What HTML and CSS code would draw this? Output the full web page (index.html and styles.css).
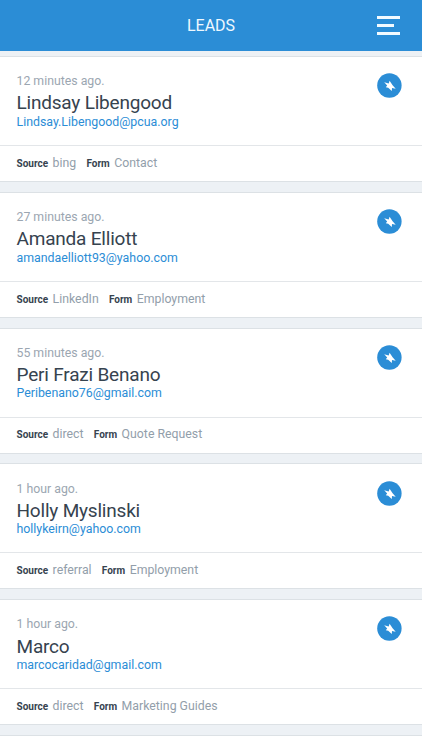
FILE: index.html
```html
<!DOCTYPE html>
<html lang="en">
<head>
<meta charset="utf-8">
<title>Leads</title>
<link rel="stylesheet" href="styles.css">
</head>
<body>
<svg class="defs" aria-hidden="true">
  <symbol id="bolt" viewBox="0 0 25 25">
    <circle cx="12.4" cy="12.5" r="12.2" fill="#2b8dd6"/>
    <path d="M7.2 9.3 L11.7 10.6 L12.6 7.8 L15.6 12.2 L18.7 15.7 L15 15 L14.8 18 L11.2 14.8 L8.8 14.2 L10.2 12.6 Z" fill="#fff"/>
  </symbol>
</svg>
<header class="topbar">
  <h1 class="title">LEADS</h1>
  <button class="menu" aria-label="Menu"><span class="bar"></span><span class="bar short"></span><span class="bar"></span></button>
</header>
<main class="leads">
  <article class="card">
    <div class="main">
      <div class="person"><p class="time">12 minutes ago.</p><h2 class="name">Lindsay Libengood</h2><a class="email">Lindsay.Libengood@pcua.org</a></div>
      <svg class="bolt"><use href="#bolt"/></svg>
    </div>
    <div class="meta"><b>Source</b><span>bing</span><b>Form</b><span>Contact</span></div>
  </article>
  <article class="card">
    <div class="main">
      <div class="person"><p class="time">27 minutes ago.</p><h2 class="name">Amanda Elliott</h2><a class="email">amandaelliott93@yahoo.com</a></div>
      <svg class="bolt"><use href="#bolt"/></svg>
    </div>
    <div class="meta"><b>Source</b><span>LinkedIn</span><b>Form</b><span>Employment</span></div>
  </article>
  <article class="card">
    <div class="main">
      <div class="person"><p class="time">55 minutes ago.</p><h2 class="name">Peri Frazi Benano</h2><a class="email">Peribenano76@gmail.com</a></div>
      <svg class="bolt"><use href="#bolt"/></svg>
    </div>
    <div class="meta"><b>Source</b><span>direct</span><b>Form</b><span>Quote Request</span></div>
  </article>
  <article class="card">
    <div class="main">
      <div class="person"><p class="time">1 hour ago.</p><h2 class="name">Holly Myslinski</h2><a class="email">hollykeirn@yahoo.com</a></div>
      <svg class="bolt"><use href="#bolt"/></svg>
    </div>
    <div class="meta"><b>Source</b><span>referral</span><b>Form</b><span>Employment</span></div>
  </article>
  <article class="card">
    <div class="main">
      <div class="person"><p class="time">1 hour ago.</p><h2 class="name">Marco</h2><a class="email">marcocaridad@gmail.com</a></div>
      <svg class="bolt"><use href="#bolt"/></svg>
    </div>
    <div class="meta"><b>Source</b><span>direct</span><b>Form</b><span>Marketing Guides</span></div>
  </article>
  <article class="card next"></article>
</main>
</body>
</html>
```
FILE: styles.css
```css
* { box-sizing: border-box; margin: 0; padding: 0; }
body {
  height: 750px;
  overflow: hidden;
  display: flex;
  flex-direction: column;
  background: #edf1f5;
  font-family: Roboto, sans-serif;
  color: #36434f;
}
.defs { display: none; }
.topbar {
  flex: none;
  height: 51px;
  display: grid;
  grid-template-columns: 1fr auto 1fr;
  align-items: center;
  padding: 0 22px;
  background: #2b8dd6;
}
.title {
  grid-column: 2;
  font-size: 16px;
  font-weight: 400;
  line-height: 20px;
  color: #eef8ff;
}
.menu {
  justify-self: end;
  width: 23px;
  display: flex;
  flex-direction: column;
  gap: 5px;
  border: 0;
  background: none;
}
.bar { height: 3px; background: #f2faff; }
.short { width: 17px; }
.leads {
  flex: 1;
  min-height: 0;
  display: flex;
  flex-direction: column;
  gap: 9.8px;
  padding-top: 5px;
}
.card {
  flex: none;
  height: 126px;
  background: #fff;
  border-top: 1px solid #dce1e5;
  border-bottom: 1px solid #dce1e5;
}
.next { flex: 1; height: auto; border-bottom: 0; }
.main {
  height: 89px;
  display: flex;
  justify-content: space-between;
  padding: 16.2px 20.5px 0 16.5px;
  border-bottom: 1px solid #e3e6e9;
}
.person { display: flex; flex-direction: column; align-items: flex-start; }
.time { font-size: 12.3px; line-height: 16px; color: #9ba6b1; }
.name { font-size: 19px; font-weight: 400; line-height: 24px; margin-top: 2.3px; letter-spacing: -0.2px; }
.email { font-size: 12.35px; line-height: 14px; margin-top: -0.6px; color: #2b8dd6; }
.bolt { width: 25px; height: 25px; }
.meta { height: 35px; display: flex; align-items: baseline; padding: 8.8px 16.5px 0; line-height: 17px; }
.meta b { font-size: 10px; font-weight: 700; margin-right: 4.5px; }
.meta span { font-size: 12.3px; color: #929eaa; margin-right: 10.2px; }
```
